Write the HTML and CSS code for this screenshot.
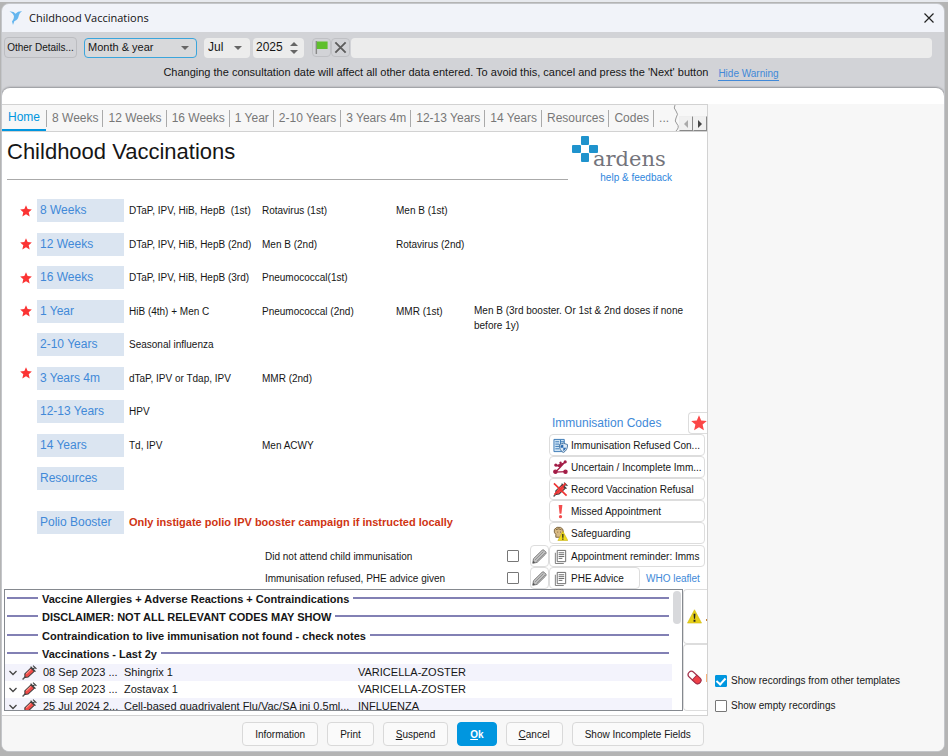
FILE: index.html
```html
<!DOCTYPE html>
<html lang="en">
<head>
<meta charset="utf-8">
<title>Childhood Vaccinations</title>
<link rel="stylesheet" href="styles.css">
</head>
<body>
<svg class="defs" aria-hidden="true">
  <symbol id="star" viewBox="0 0 16 16"><path d="M8 .2l2.200 5.200 5.600.5-4.200 3.700 1.300 5.700L8 12.300l-4.900 3 1.300-5.700L.2 5.900l5.600-.5z" fill="currentColor"/></symbol>
  <symbol id="syringe" viewBox="0 0 16 16">
    <path d="M.6 15.400L4 12" stroke="#555" stroke-width="1.500"/>
    <path d="M3 9.500l6.500-6.300 3.600 3.500-6.600 6.200-3.300.4z" fill="#f04a48" stroke="#3a3a3a" stroke-width="1.100"/>
    <path d="M4.500 9.500l5-4.800" stroke="#ff8f88" stroke-width="1.200"/>
    <path d="M9.200 1.800l5.200 5.200M11.500 4.600L13.700 2.400M11.800.6l3.600 3.600" stroke="#444" stroke-width="1.300"/>
  </symbol>
  <symbol id="document" viewBox="0 0 16 16">
    <path d="M2.500 4v11.500h9" fill="none" stroke="#777"/>
    <path d="M4.500 1.500h9v12h-9z" fill="#fff" stroke="#666"/>
    <path d="M6 4h6M6 6h6M6 8h6M6 10h4" stroke="#666"/>
  </symbol>
  <symbol id="pencil" viewBox="0 0 16 16">
    <path d="M.8 15.200l.8-4.900L10.800 1.300q1.100-.9 2.200.1l1.700 1.700q.9 1.100-.1 2.200L5.400 14.300z" fill="#c2c2c2" stroke="#777"/>
    <path d="M3.200 11.800l9-9M4.800 13.200l9-8.900" stroke="#7d7d7d" stroke-width=".8"/>
    <path d="M.8 15.200l.5-2.700L3.500 14.500z" fill="#555"/>
  </symbol>
  <symbol id="warning" viewBox="0 0 16 16"><path d="M8 .8L15.500 15H.5z" fill="#e6cf17" stroke="#cfb90d" stroke-width=".6"/><path d="M7 5h2l-.4 5.500H7.400zM7 11.500h2v2H7z" fill="#222"/></symbol>
  <symbol id="chevron" viewBox="0 0 10 10"><path d="M1.500 3l3.500 3.500L8.500 3" fill="none" stroke="#444" stroke-width="1.300"/></symbol>
</svg>

<div class="window">
  <header class="titlebar">
    <svg class="app-icon" viewBox="0 0 14 16" aria-hidden="true"><path d="M.5 1.500q4-.6 6 2.200Q9 1 13 1.300 10.500 2.600 9.800 5.500 9.500 9.500 5.300 11.200L4 15l-1-3.500q2-2.300 2-5Q4.500 3.500.5 1.500z" fill="#64b5ee"/></svg>
    <h1 class="window-title">Childhood Vaccinations</h1>
    <button class="close" aria-label="Close"><svg viewBox="0 0 12 12"><path d="M1.500 1.500l9 9M10.500 1.500l-9 9" stroke="#222" stroke-width="1.200"/></svg></button>
  </header>

  <div class="toolbar">
    <div class="toolbar-row">
      <button class="details">Other Details...</button>
      <span class="select select-wide"><select aria-label="Date precision"><option>Month &amp; year</option></select></span>
      <span class="select select-month"><select aria-label="Month"><option>Jul</option></select></span>
      <span class="spinner">
        <input type="text" value="2025" aria-label="Year">
        <span class="spin-buttons"><button class="spin-up" aria-label="Next year"></button><button class="spin-down" aria-label="Previous year"></button></span>
      </span>
      <span class="tool-buttons">
        <button class="tool" aria-label="Flag"><svg viewBox="0 0 16 16"><path d="M2.500 1v14" stroke="#888" stroke-width="1.500"/><path d="M3 1.500h11.500v8H3z" fill="#5fbf2d"/></svg></button>
        <button class="tool" aria-label="Clear"><svg viewBox="0 0 16 16"><path d="M2.500 2.500l11 11M13.500 2.500l-11 11" stroke="#5c5c5c" stroke-width="2"/></svg></button>
      </span>
      <input class="note" type="text" aria-label="Note">
    </div>
    <p class="notice"><span>Changing the consultation date will affect all other data entered. To avoid this, cancel and press the 'Next' button</span><a class="hide-warning" href="#">Hide Warning</a></p>
  </div>

  <div class="sheet">
    <div class="workspace">
      <main class="template">
        <nav class="tabs" aria-label="Template pages">
          <button class="tab tab-active">Home</button>
          <button class="tab">8 Weeks</button>
          <button class="tab">12 Weeks</button>
          <button class="tab">16 Weeks</button>
          <button class="tab">1 Year</button>
          <button class="tab">2-10 Years</button>
          <button class="tab">3 Years 4m</button>
          <button class="tab">12-13 Years</button>
          <button class="tab">14 Years</button>
          <button class="tab">Resources</button>
          <button class="tab">Codes</button>
          <button class="tab">...</button>
          <svg class="tear" viewBox="0 0 6 26" aria-hidden="true"><path d="M2 0q-2 3 1 6t0 7q-2 3 1 6t-1 7" fill="none" stroke="#999"/></svg>
          <span class="tab-scroll">
            <button class="scroll scroll-left" aria-label="Scroll tabs left"></button>
            <button class="scroll scroll-right" aria-label="Scroll tabs right"></button>
          </span>
        </nav>

        <div class="page">
          <div class="page-head">
            <h2 class="page-title">Childhood Vaccinations</h2>
            <div class="brand">
              <div class="brand-logo">
                <svg class="brand-mark" viewBox="0 0 26 26" aria-hidden="true"><g fill="#1f93cd"><rect x="9" y="0" width="8" height="9" rx="1"/><rect x="0" y="9" width="9" height="8" rx="1"/><rect x="17" y="9" width="9" height="8" rx="1"/><rect x="9" y="17" width="8" height="9" rx="1"/></g></svg>
                <span class="brand-name">ardens</span>
              </div>
              <a class="help" href="#">help &amp; feedback</a>
            </div>
          </div>

          <div class="page-body">
            <div class="schedule">
              <div class="ages">
                <div class="age"><svg class="due"><use href="#star"/></svg><a class="age-link" href="#">8 Weeks</a><span>DTaP, IPV, HiB, HepB &nbsp;(1st)</span><span>Rotavirus (1st)</span><span>Men B (1st)</span></div>
                <div class="age"><svg class="due"><use href="#star"/></svg><a class="age-link" href="#">12 Weeks</a><span>DTaP, IPV, HiB, HepB (2nd)</span><span>Men B (2nd)</span><span>Rotavirus (2nd)</span></div>
                <div class="age"><svg class="due"><use href="#star"/></svg><a class="age-link" href="#">16 Weeks</a><span>DTaP, IPV, HiB, HepB (3rd)</span><span>Pneumococcal(1st)</span></div>
                <div class="age"><svg class="due"><use href="#star"/></svg><a class="age-link" href="#">1 Year</a><span>HiB (4th) + Men C</span><span>Pneumococcal (2nd)</span><span>MMR (1st)</span><span class="dose-note">Men B (3rd booster. Or 1st &amp; 2nd doses if none before 1y)</span></div>
                <div class="age"><a class="age-link" href="#">2-10 Years</a><span>Seasonal influenza</span></div>
                <div class="age"><svg class="due due-raised"><use href="#star"/></svg><a class="age-link" href="#">3 Years 4m</a><span>dTaP, IPV or Tdap, IPV</span><span>MMR (2nd)</span></div>
                <div class="age"><a class="age-link" href="#">12-13 Years</a><span>HPV</span></div>
                <div class="age"><a class="age-link" href="#">14 Years</a><span>Td, IPV</span><span>Men ACWY</span></div>
                <div class="age"><a class="age-link" href="#">Resources</a></div>
              </div>
              <div class="age"><a class="age-link" href="#">Polio Booster</a><strong class="alert">Only instigate polio IPV booster campaign if instructed locally</strong></div>
            </div>

            <section class="codes">
              <div class="codes-head"><h3 class="codes-title">Immunisation Codes</h3><button class="fav" aria-label="Favourite"><svg><use href="#star"/></svg></button></div>
              <button class="code"><svg viewBox="0 0 16 16"><path d="M1 1.500h11v13H1z" fill="#cfe4f5" stroke="#3a79b5"/><path d="M2.500 4h4M2.500 6.500h4M2.500 9h4M2.500 11.500h4M8 2v6M8 4h4" stroke="#3a79b5"/><path d="M11 5.500l4.500 1.500q.3 6-4.500 8.500Q6.500 13 6.800 7z" fill="#dbe9f6" stroke="#47749f"/><path d="M11 7v3.500H8q0-1 0-2.500zM11 10.500h3q-.5 2-3 3.500z" fill="#2b6bb0"/></svg>Immunisation Refused Con...</button>
              <button class="code"><svg viewBox="0 0 16 16"><g stroke="#a31c46" fill="#a31c46" stroke-width="1.400"><path d="M3 5.500l5 2L13 2M8 7.500L3 12.500M2 13l12-.5M8 3l1 4"/><circle cx="3" cy="5.500" r="1"/><circle cx="13" cy="2" r="1"/><circle cx="8" cy="3" r=".6"/><circle cx="2.500" cy="12.500" r="1.700"/><circle cx="13.300" cy="12.500" r="1.700"/></g></svg>Uncertain / Incomplete Imm...</button>
              <button class="code"><svg viewBox="0 0 16 16"><use href="#syringe"/><path d="M1 1.500l13.500 13M1.500 13.500l12-12" stroke="#ee3434" stroke-width="1.800"/></svg>Record Vaccination Refusal</button>
              <button class="code"><svg viewBox="0 0 16 16"><path d="M6 1h4l-1 9.500H7z" fill="#f34d4d"/><circle cx="8" cy="13.500" r="1.700" fill="#f34d4d"/></svg>Missed Appointment</button>
              <button class="code"><svg viewBox="0 0 16 16"><path d="M3 12V9Q.5 7 1.500 3.500 4 .3 8 1.500q3 1 3 4.500L8.500 12z" fill="#d9ba83" stroke="#7a6442"/><path d="M3 4q3-2 6 0M5 6v1M8 6v1" stroke="#7a6442" fill="none"/><path d="M10.500 5.500l5.300 10H5.200z" fill="#f0dc1d" stroke="#c4ae10" stroke-width=".6"/><path d="M10.500 8.500v4M10.500 13.300v1.300" stroke="#222" stroke-width="1.300"/></svg>Safeguarding</button>
            </section>
          </div>

          <div class="recalls">
            <div class="recall">
              <label class="recall-label" for="dna">Did not attend child immunisation</label>
              <input class="check" type="checkbox" id="dna">
              <button class="edit" aria-label="Edit reminder"><svg><use href="#pencil"/></svg></button>
              <button class="code code-fill"><svg><use href="#document"/></svg>Appointment reminder: Imms</button>
            </div>
            <div class="recall">
              <label class="recall-label" for="phe">Immunisation refused, PHE advice given</label>
              <input class="check" type="checkbox" id="phe">
              <button class="edit" aria-label="Edit advice"><svg><use href="#pencil"/></svg></button>
              <button class="code code-fill"><svg><use href="#document"/></svg>PHE Advice</button>
              <a class="leaflet" href="#">WHO leaflet</a>
            </div>
          </div>
        </div>

        <div class="record">
          <div class="history">
            <div class="history-content">
              <div class="groups">
                <h4 class="group">Vaccine Allergies + Adverse Reactions + Contraindications</h4>
                <h4 class="group">DISCLAIMER: NOT ALL RELEVANT CODES MAY SHOW</h4>
                <h4 class="group">Contraindication to live immunisation not found - check notes</h4>
                <h4 class="group">Vaccinations - Last 2y</h4>
              </div>
              <table class="entries">
                <tr><td class="col-open"><svg class="chev"><use href="#chevron"/></svg></td><td class="col-icon"><svg class="jab"><use href="#syringe"/></svg></td><td class="col-date">08 Sep 2023 ...</td><td class="col-name">Shingrix 1</td><td>VARICELLA-ZOSTER</td></tr>
                <tr><td><svg class="chev"><use href="#chevron"/></svg></td><td><svg class="jab"><use href="#syringe"/></svg></td><td>08 Sep 2023 ...</td><td>Zostavax 1</td><td>VARICELLA-ZOSTER</td></tr>
                <tr><td><svg class="chev"><use href="#chevron"/></svg></td><td><svg class="jab"><use href="#syringe"/></svg></td><td>25 Jul 2024 2...</td><td>Cell-based quadrivalent Flu/Vac/SA inj 0.5ml...</td><td>INFLUENZA</td></tr>
              </table>
            </div>
            <div class="scrollbar"><div class="thumb"></div></div>
          </div>
          <div class="shortcuts">
            <button class="shortcut" aria-label="Allergies"><svg><use href="#warning"/></svg><i class="sliver sliver-dot"></i></button>
            <button class="shortcut shortcut-tall" aria-label="Medication"><svg viewBox="0 0 16 16"><g transform="rotate(43 8 8)"><rect x="0" y="4.500" width="16" height="7" rx="3.500" fill="#fff" stroke="#a3304a" stroke-width="1.200"/><path d="M8 4.500h4.500a3.500 3.500 0 010 7H8z" fill="#ee4148" stroke="#a3304a"/></g></svg><i class="sliver"></i></button>
          </div>
        </div>
      </main>

      <aside class="options">
        <label class="option"><input class="check" type="checkbox" checked>Show recordings from other templates</label>
        <label class="option"><input class="check" type="checkbox">Show empty recordings</label>
      </aside>
    </div>

    <footer class="actions">
      <button class="action">Information</button>
      <button class="action">Print</button>
      <button class="action"><u>S</u>uspend</button>
      <button class="action action-primary"><u>O</u>k</button>
      <button class="action"><u>C</u>ancel</button>
      <button class="action">Show Incomplete Fields</button>
    </footer>
  </div>
</div>
</body>
</html>
```
FILE: styles.css
```css
* { box-sizing: border-box; }

:root {
  --ink: #161616;
  --link: #4189d8;
  --accent: #0096df;
  --panel: #f7f7f7;
  --rule: #d2d2d2;
  --bar: #d2d3d7;
}

body {
  margin: 0;
  min-height: 100vh;
  display: flex;
  background: #b4b4b4;
  border-top: 2px solid #e7e9ee;
  font: 10px/15px "Liberation Sans", Arial, sans-serif;
  color: var(--ink);
}

button, input, select { font: inherit; color: inherit; margin: 0; padding: 0; }
button { border: 0; background: none; white-space: nowrap; }
h1, h2, h3, h4, p { margin: 0; font-weight: normal; }
svg { display: block; flex: none; }
a { color: var(--link); text-decoration: none; }
.defs { position: absolute; width: 0; height: 0; }

.window {
  flex: 1;
  display: flex;
  flex-direction: column;
  margin: 1px 3px 4px 1px;
  border: 1px solid #c4c6ca;
  border-radius: 8px;
  background: var(--bar);
  overflow: hidden;
}

/* Title bar */
.titlebar {
  display: flex;
  align-items: center;
  height: 28px;
  padding: 0 9px 0 7px;
  background: #f1f3f9;
}
.app-icon { width: 14px; height: 16px; margin-right: 6px; }
.window-title { flex: 1; font: 11px/16px "Open Sans", sans-serif; color: #111; }
.close svg { width: 12px; height: 12px; }

/* Consultation date toolbar */
.toolbar { padding: 5px 12px 7px 2px; }
.toolbar-row { display: flex; align-items: center; height: 21px; }
.details {
  width: 73px;
  height: 21px;
  margin-right: 7px;
  border: 1px solid #bcbdc1;
  border-radius: 4px;
}
.select { position: relative; height: 20px; }
.select select {
  appearance: none;
  width: 100%;
  height: 100%;
  padding: 0 4px;
  border: 0;
  border-radius: 4px;
  background: #ececec;
  font-size: 12px;
}
.select::after {
  content: "";
  position: absolute;
  right: 8px;
  top: 8px;
  border: 4px solid transparent;
  border-top-color: #666;
  border-bottom: 0;
  pointer-events: none;
}
.select-wide { width: 113px; margin-right: 7px; }
.select-wide select { border: 1px solid #3aa5dc; background: #d8d9db; padding: 0 3px; font-size: 11px; }
.select-month { width: 46px; margin-right: 3px; }
.spinner {
  display: flex;
  align-items: center;
  width: 51px;
  height: 20px;
  margin-right: 8px;
  padding: 0 6px 0 3px;
  border-radius: 4px;
  background: #ececec;
}
.spinner input { flex: 1; min-width: 0; border: 0; background: none; font-size: 12px; }
.spin-buttons { display: flex; flex-direction: column; gap: 4px; }
.spin-buttons button { border: 4px solid transparent; }
.spin-buttons .spin-up { border-top: 0; border-bottom-color: #666; }
.spin-buttons .spin-down { border-bottom: 0; border-top-color: #666; }
.tool-buttons { display: flex; margin-right: 1px; }
.tool {
  display: grid;
  place-items: center;
  width: 19px;
  height: 19px;
  border: 1px solid #c0c1c5;
  border-radius: 4px;
}
.tool svg { width: 15px; height: 15px; }
.note { flex: 1; height: 20px; padding: 0 4px; border: 0; border-radius: 4px; background: #ececec; }
.notice {
  display: flex;
  justify-content: center;
  align-items: flex-end;
  gap: 10px;
  height: 23px;
  padding-left: 6px;
  font-size: 11px;
  line-height: 18px;
}
.hide-warning { font-size: 10px; line-height: 12px; border-bottom: 1px solid var(--link); }

/* Sheet that holds the template and the footer */
.sheet {
  flex: 1;
  display: flex;
  flex-direction: column;
  padding-top: 16px;
  border-radius: 8px 8px 0 0;
  background: #fff;
  box-shadow: 0 0 2px 1px #939498;
}
.workspace { flex: 1; display: flex; background: var(--panel); }
.template {
  flex: 3;
  display: flex;
  flex-direction: column;
  min-width: 706px;
  border: 1px solid var(--rule);
  border-left: 0;
  background: #fff;
}

/* Tabs */
.tabs {
  display: flex;
  align-items: center;
  height: 27px;
  background: var(--panel);
  border-bottom: 1px solid var(--rule);
}
.tab {
  padding: 0 4px 0 5px;
  height: 17px;
  border-right: 1px solid #aaa;
  font-size: 12px;
  color: #777;
}
.tab-active { align-self: stretch; height: auto; padding: 0 6px; border-right: 0; border-bottom: 2px solid var(--accent); color: var(--accent); }
.tab-active + .tab { border-left: 1px solid #aaa; }
.tab:nth-of-type(12) { border: 0; padding-right: 2px; }
.tear { width: 6px; height: 26px; margin-left: auto; }
.tab-scroll { display: flex; align-self: flex-end; }
.scroll {
  display: grid;
  place-items: center;
  width: 14px;
  height: 15px;
  border: 1px solid;
  border-color: #eee #888 #888 #eee;
  background: #f0f0f0;
}
.scroll::before { content: ""; border: 4px solid transparent; }
.scroll-left::before { border-left: 0; border-right-color: #aaa; }
.scroll-right::before { border-right: 0; border-left-color: #444; }

/* Home page */
.page { flex: 1; display: flex; flex-direction: column; }
.page-head { display: flex; align-items: flex-start; height: 67px; padding: 0 35px 0 5px; }
.page-title { flex: 1; height: 48px; border-bottom: 1px solid #aaa; font-size: 22px; line-height: 40px; }
.brand { width: 104px; padding: 4px 0 0 4px; }
.brand-logo { display: flex; align-items: flex-start; height: 33px; }
.brand-mark { width: 26px; height: 26px; }
.brand-name { margin: 11px 0 0 -5px; font: 21px/24px "DejaVu Serif", serif; color: #74747c; }
.help { display: block; padding-top: 1px; text-align: right; color: #2f86dd; }

.page-body { flex: 1; display: grid; }
.schedule { grid-area: 1 / 1; display: flex; flex-direction: column; gap: 21px; }
.ages { display: flex; flex-direction: column; justify-content: space-between; height: 291px; }
.age {
  display: grid;
  grid-template-columns: 30px 87px 128px 129px 73px 224px;
  grid-template-rows: 23px;
  column-gap: 5px;
  align-items: center;
}
.age > span { white-space: nowrap; }
.age .dose-note { align-self: start; white-space: normal; padding-top: 3px; }
.due { width: 12px; height: 12px; margin-left: 18px; color: #fb3434; }
.due-raised { align-self: start; }
.age-link {
  grid-column: 2;
  padding-left: 3px;
  background: #dbe5f1;
  font-size: 12px;
  line-height: 23px;
}
.alert { grid-column: 3 / -1; color: #cf3413; font-size: 11px; }

.codes { grid-area: 1 / 1; justify-self: end; align-self: end; width: 158px; padding-bottom: 1px; }
.codes-head { display: flex; align-items: center; justify-content: space-between; height: 22px; padding-left: 3px; }
.codes-title { font-size: 12px; color: var(--link); }
.fav { width: 19px; height: 22px; padding-left: 2px; border: 1px solid #ddd; border-right: 0; border-radius: 4px 0 0 4px; color: #fb4747; overflow: hidden; }
.fav svg { width: 16px; height: 16px; }
.code {
  display: flex;
  align-items: center;
  gap: 3px;
  width: 156px;
  height: 22px;
  padding: 0 3px;
  border: 1px solid #ddd;
  border-radius: 4px;
}
.code svg, .edit svg { width: 15px; height: 15px; }

.recalls { padding-right: 2px; }
.recall { display: grid; grid-template-columns: 242px 23px 19px 91px 65px; justify-content: end; align-items: center; height: 22px; }
.check {
  appearance: none;
  display: grid;
  place-items: center;
  width: 12px;
  height: 12px;
  border: 1px solid #777;
  border-radius: 1px;
  background: #fff;
}
.check:checked { border-color: var(--accent); background: var(--accent); }
.check:checked::before {
  content: "";
  width: 4px;
  height: 7px;
  margin-bottom: 2px;
  border: solid #fff;
  border-width: 0 2px 2px 0;
  transform: rotate(42deg);
}
.edit { display: grid; place-items: center; height: 22px; border: 1px solid #ddd; border-radius: 4px; }
.code-fill { width: auto; }
.code-fill:last-child { grid-column: 4 / -1; }
.leaflet { padding-left: 6px; white-space: nowrap; }

/* Patient record */
.record { display: flex; height: 126px; padding: 0 0 4px 2px; }
.history { flex: 1; display: flex; border: 1px solid #85898f; overflow: hidden; }
.history-content { flex: 1; min-width: 0; }
.groups { display: grid; height: 74px; margin: 0 3px 0 2px; }
.group { display: flex; align-items: center; gap: 4px; font-size: 11px; font-weight: bold; white-space: nowrap; }
.group::before, .group::after { content: ""; width: 31px; height: 2px; margin-bottom: 3px; background: #8280b4; }
.group::after { flex: 1; }
.entries { width: 100%; table-layout: fixed; border-collapse: collapse; font-size: 11px; }
.entries td { height: 17px; padding: 0; line-height: 17px; white-space: nowrap; }
.entries tr:nth-child(odd) { background: #f3f3fc; }
.col-open { width: 17px; }
.col-icon { width: 21px; }
.col-date { width: 81px; }
.col-name { width: 234px; }
.chev { width: 10px; height: 10px; margin-left: 3px; }
.jab { width: 15px; height: 15px; }
.scrollbar { width: 10px; padding: 1px; }
.thumb { height: 33px; border-radius: 4px; background: #d8d9dc; }
.shortcuts { display: flex; flex-direction: column; width: 24px; }
.shortcut {
  display: flex;
  align-items: center;
  justify-content: space-between;
  height: 55px;
  padding-left: 3px;
  border: 1px solid #ddd;
  border-right: 0;
  border-radius: 4px 0 0 4px;
}
.shortcut-tall { flex: 1; }
.shortcut svg { width: 15px; height: 15px; }
.sliver { width: 1px; height: 8px; background: #f6b37c; }
.sliver-dot { height: 2px; margin-top: 6px; background: #c9822f; }

/* Side options */
.options {
  flex: 1;
  display: flex;
  flex-direction: column;
  justify-content: flex-end;
  gap: 10px;
  padding: 0 0 3px 7px;
}
.option { display: flex; align-items: center; gap: 4px; white-space: nowrap; }

/* Footer */
.actions {
  display: flex;
  justify-content: center;
  gap: 9px;
  padding: 6px 0 5px;
  background: var(--panel);
}
.action {
  height: 24px;
  padding: 0 12px;
  border: 1px solid #d9d9d9;
  border-radius: 4px;
  background: #fafafa;
}
.action-primary { border-color: var(--accent); background: var(--accent); color: #fff; font-weight: bold; }
```
